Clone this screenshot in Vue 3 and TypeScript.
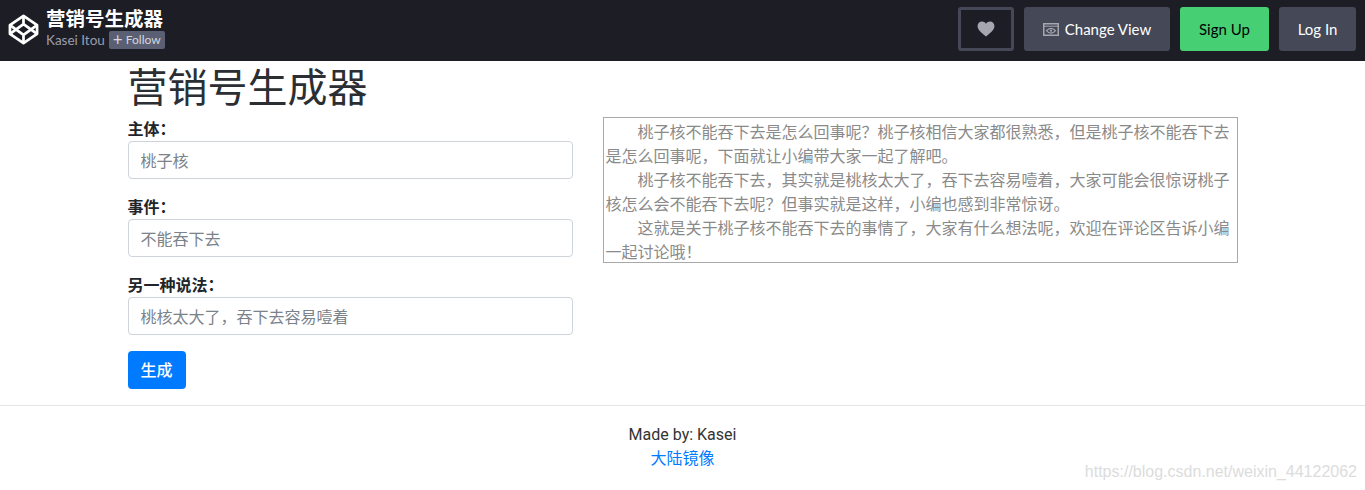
<script setup lang="ts">
const fields = [
  { label: '主体：', placeholder: '桃子核' },
  { label: '事件：', placeholder: '不能吞下去' },
  { label: '另一种说法：', placeholder: '桃核太大了，吞下去容易噎着' },
]
const paragraphs = [
  '桃子核不能吞下去是怎么回事呢？桃子核相信大家都很熟悉，但是桃子核不能吞下去是怎么回事呢，下面就让小编带大家一起了解吧。',
  '桃子核不能吞下去，其实就是桃核太大了，吞下去容易噎着，大家可能会很惊讶桃子核怎么会不能吞下去呢？但事实就是这样，小编也感到非常惊讶。',
  '这就是关于桃子核不能吞下去的事情了，大家有什么想法呢，欢迎在评论区告诉小编一起讨论哦！',
]
</script>

<template>
  <div class="page" lang="zh-CN">
    <header class="bar">
      <div class="brand">
        <svg class="logo" viewBox="0 0 32 32" width="31" height="31" fill="none" stroke="#fff" stroke-width="2.8" stroke-linejoin="round">
          <path d="M16 2 30 11.500V20.500L16 30 2 20.500V11.500Z" />
          <path d="M16 2V10.500M16 21.500V30M2 11.500 16 21.500 30 11.500M2 20.500 16 10.500 30 20.500" />
        </svg>
        <div class="brand-text">
          <div class="brand-title">营销号生成器</div>
          <div class="brand-sub">
            <span class="author">Kasei Itou</span>
            <span class="follow"><span class="plus">+</span> Follow</span>
          </div>
        </div>
      </div>
      <nav class="actions">
        <button class="btn heart" aria-label="Like">
          <svg viewBox="0 0 20 18" width="18" height="16" fill="#a5a6b0">
            <path d="M10 17.500C4 12.600.5 9.600.5 5.600.5 2.600 2.800.5 5.400.5 7.200.5 9 1.400 10 3 11 1.400 12.800.5 14.600.5c2.600 0 4.900 2.100 4.900 5.100 0 4-3.500 7-9.500 11.900Z" />
          </svg>
        </button>
        <button class="btn gray change">
          <svg viewBox="0 0 16 13" width="16" height="13" fill="none" stroke="#a5a6b0">
            <rect x=".75" y=".75" width="14.500" height="11.500" stroke-width="1.500" />
            <path d="M1 3.200H15" stroke-width="1" />
            <path d="M3.500 7.700C5 5.900 6.500 5.300 8 5.300S11 5.900 12.500 7.700C11 9.500 9.500 10.100 8 10.100S5 9.500 3.500 7.700Z" stroke-width="1.200" />
            <circle cx="8" cy="7.700" r="1.100" fill="#a5a6b0" stroke="none" />
          </svg>
          Change View
        </button>
        <button class="btn signup">Sign Up</button>
        <button class="btn gray login">Log In</button>
      </nav>
    </header>

    <main class="container">
      <h1 class="title">营销号生成器</h1>
      <div class="row">
        <form class="left" @submit.prevent>
          <div v-for="f in fields" :key="f.label" class="group">
            <label class="label">{{ f.label }}</label>
            <input class="input" type="text" :placeholder="f.placeholder" />
          </div>
          <button class="primary" type="button">生成</button>
        </form>
        <div class="output">
          <p v-for="p in paragraphs" :key="p" class="para">{{ p }}</p>
        </div>
      </div>
    </main>

    <footer class="footer">
      <div>Made by: Kasei</div>
      <a class="link" href="#">大陆镜像</a>
    </footer>
    <div class="watermark">https://blog.csdn.net/weixin_44122062</div>
  </div>
</template>

<style>
html, body { margin: 0; background: #fff; }
</style>

<style scoped>
.page {
  position: relative;
  height: 490px;
  overflow: hidden;
  font-family: "Noto Sans CJK SC", sans-serif;
  font-size: 16px;
  line-height: 24px;
  color: #212529;
}
.bar {
  height: 61px;
  box-sizing: border-box;
  background: #1c1d25;
  display: flex;
  justify-content: space-between;
  align-items: flex-start;
  padding: 7px 9px 0 8px;
}
.brand { display: flex; align-items: center; gap: 7px; height: 44px; }
.logo { display: block; }
.brand-text { display: flex; flex-direction: column; margin-top: -3px; }
.brand-title { color: #fff; font-weight: 700; font-size: 19.500px; line-height: 24px; }
.brand-sub { display: flex; align-items: center; gap: 4px; height: 18px; margin-top: 1px; }
.author { font-family: Lato, sans-serif; font-size: 13.500px; color: #9b9dad; line-height: 18px; }
.follow {
  background: #5a5f73;
  color: #d5d7de;
  font-family: Lato, sans-serif;
  font-size: 12px;
  line-height: 18px;
  height: 18px;
  width: 56px;
  box-sizing: border-box;
  padding-left: 4px;
  border-radius: 2px;
  white-space: nowrap;
}
.plus { font-size: 17px; line-height: 18px; vertical-align: top; }
.actions { display: flex; gap: 10px; }
.btn {
  height: 44px;
  box-sizing: border-box;
  border: 0;
  border-radius: 3px;
  font-family: Lato, sans-serif;
  font-size: 15px;
  display: flex;
  align-items: center;
  justify-content: center;
  padding: 0;
}
.heart { width: 56px; background: #1c1d25; border: 3px solid #444857; }
.gray { background: #444857; color: #fff; }
.change { width: 146px; gap: 6px; }
.signup { width: 89px; background: #47cf73; color: #000; }
.login { width: 77px; }
.container {
  width: 1110px;
  margin: 0 auto;
}
.title {
  margin: 0 0 8px;
  font-size: 40px;
  line-height: 48px;
  font-weight: 400;
  color: #2b2f33;
}
.row { display: flex; gap: 30px; align-items: flex-start; }
.left { width: 445px; flex: none; }
.group { margin-bottom: 16px; }
.label { display: block; font-weight: 700; line-height: 22px; padding-bottom: 2px; }
.input {
  display: block;
  width: 100%;
  height: 38px;
  box-sizing: border-box;
  padding: 6px 12px;
  border: 1px solid #ced4da;
  border-radius: 4px;
  font: inherit;
  color: #495057;
}
.input::placeholder { color: #7a828a; opacity: 1; }
.primary {
  display: block;
  width: 58px;
  height: 38px;
  background: #007bff;
  color: #fff;
  border: 0;
  border-radius: 4px;
  font: inherit;
  font-weight: 500;
  padding: 0 0 2px;
}
.output {
  width: 635px;
  height: 146px;
  box-sizing: border-box;
  border: 1px solid #a9a9a9;
  padding: 1px 2px 0;
  color: #8a8a8a;
}
.para { margin: 0; text-indent: 2em; }
.footer {
  margin-top: 16px;
  border-top: 1px solid #e5e5e5;
  padding-top: 17px;
  text-align: center;
  color: #333;
  font-family: Roboto, "Noto Sans CJK SC", sans-serif;
}
.link { display: block; color: #007bff; text-decoration: none; }
.watermark {
  position: absolute;
  right: 8px;
  top: 461px;
  font-family: "Liberation Sans", sans-serif;
  font-size: 16px;
  line-height: 22px;
  color: #dcdcdc;
  white-space: nowrap;
}
</style>
